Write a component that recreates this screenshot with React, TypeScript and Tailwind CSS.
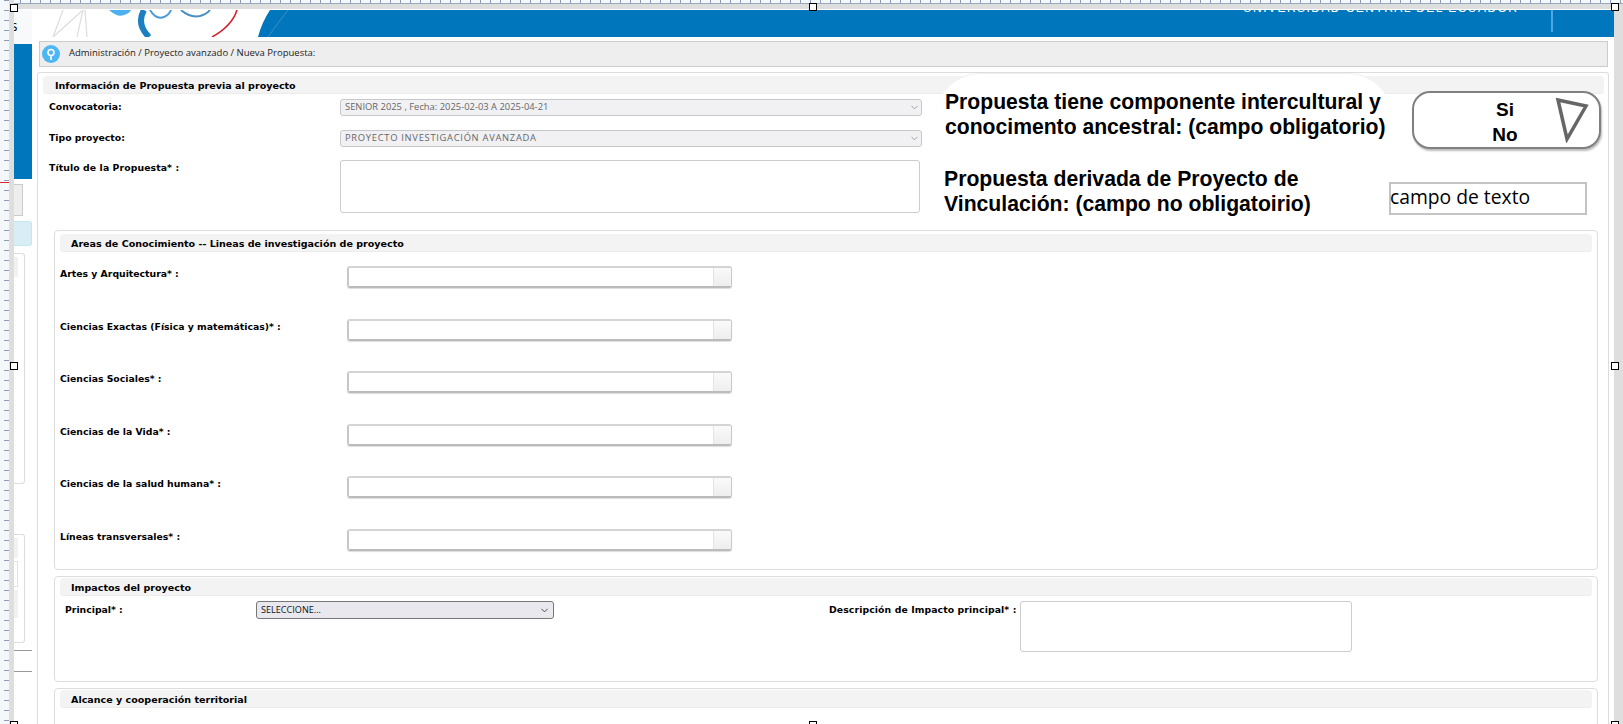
import React from "react";
import { ChevronDown } from "lucide-react";

const areas = [
  "Artes y Arquitectura* :",
  "Ciencias Exactas (Física y matemáticas)* :",
  "Ciencias Sociales* :",
  "Ciencias de la Vida* :",
  "Ciencias de la salud humana* :",
  "Líneas transversales* :",
];

function SectionTitle({ children, className }: { children: React.ReactNode; className: string }) {
  return (
    <div className={`h-[18px] rounded-[4px] bg-[#f3f3f3] border-b border-[#ececec] text-[9.55px] font-bold text-black leading-[20px] ${className}`}>
      {children}
    </div>
  );
}

function Label({ children, className }: { children: React.ReactNode; className: string }) {
  return <div className={`text-[9.3px] font-bold text-black ${className}`}>{children}</div>;
}

// select deshabilitado de la primera seccion
function GreySelect({ text, className }: { text: string; className?: string }) {
  return (
    <div className="w-[582px] h-[17px] rounded-[3px] border border-[#c8c8cc] bg-[#f1f1f4] flex items-center justify-between pl-[4px] pr-[1px] font-['Open_Sans',sans-serif] text-[9.4px] text-[#666]">
      <span className={className}>{text}</span>
      <ChevronDown size={11} className="text-[#999]" />
    </div>
  );
}

function ComboInput() {
  return (
    <div className="w-[385px] h-[22px] flex rounded-[3px] border border-l-2 border-[#c8c8c8] border-b-2 border-b-[#bbb] border-t-2 border-t-[#d4d4d4] shadow-[0_1px_1px_#ddd]">
      <div className="flex-1 bg-white" />
      <div className="w-[18px] rounded-r-[2px] bg-gradient-to-b from-[#fafafa] to-[#eeeeee] border-l border-[#e4e4e4]" />
    </div>
  );
}

function Handle({ className }: { className: string }) {
  return <div className={`absolute w-[8px] h-[8px] bg-white border border-black ${className}`} />;
}

function Logo() {
  return (
    <svg width="270" height="27" viewBox="0 0 270 27" className="shrink-0">
      <path d="M0 0H238Q230 12 226 27H0Z" fill="#fff" />
      <g stroke="#dcdcdc" strokeWidth="1.2" fill="none">
        <path d="M31 0L21 27" />
        <path d="M51 0L21 27" />
        <path d="M51 0L45 27" />
        <path d="M53 0L55 27" />
      </g>
      <path d="M77 0Q86 8 92 5Q98 3 99 0Z" fill="#4db0ef" />
      <path d="M112 0Q104 14 117 27" stroke="#1b7fc0" strokeWidth="6" fill="none" />
      <path d="M118 0Q124 10 132 7Q137 5 139 0" stroke="#4a9bd6" strokeWidth="2" fill="none" />
      <path d="M149 0Q158 8 168 6Q175 4 178 0" stroke="#4a8fc4" strokeWidth="2" fill="none" />
      <path d="M205 0Q200 16 180 27" stroke="#d4222e" strokeWidth="1.6" fill="none" />
      <path d="M256 0Q245 14 236 27" stroke="#3d8fc4" strokeWidth="1" fill="none" />
    </svg>
  );
}

export default function App() {
  return (
    <div className="relative h-[724px] w-full overflow-hidden bg-white font-['DejaVu_Sans',sans-serif] flex flex-col">
      {/* reglas de arriba */}
      <div className="h-[3px] shrink-0 bg-[repeating-linear-gradient(90deg,#8b9bb8_0,#8b9bb8_1px,#f5f8fb_1px,#f5f8fb_10px)]" />
      <div className="h-[6px] shrink-0 bg-[#dedede] border-t border-[#9aa8c0]" />
      <div className="h-[1px] shrink-0 bg-white" />

      <div className="flex flex-1 min-h-0">
        {/* regla izquierda */}
        <div className="w-[9px] -mt-[10px] shrink-0 bg-[#f5f8fb] bg-[repeating-linear-gradient(180deg,#8b9bb8_0,#8b9bb8_1px,transparent_1px,transparent_10px)] bg-[length:5px_100%] bg-right bg-no-repeat" />
        <div className="w-[5px] -mt-[10px] shrink-0 bg-[#dedede]" />

        {/* barra lateral cortada */}
        <div className="w-[18px] shrink-0 flex flex-col bg-white text-black">
          <div className="h-[34px] bg-[#f8f9fb] overflow-hidden text-[10px] leading-[10px] pt-[13px] -indent-[3px]">S</div>
          <div className="h-[135px] bg-[#0077bd]" />
          <div className="w-[9px] h-[32px] mt-[5px] bg-[#eee] border border-l-0 border-[#ccc]" />
          <div className="h-[25px] mt-[5px] bg-[#d9edf7] border border-l-0 border-[#c5e8f0] rounded-r-[3px]" />
          <div className="w-[11px] h-[231px] mt-[7px] border border-l-0 border-[#ddd] rounded-r-[3px] pt-[3px]">
            <div className="w-[4px] h-[20px] bg-[#f1f1f1]" />
          </div>
          <div className="w-[11px] h-[109px] mt-[50px] border border-l-0 border-[#ddd] rounded-r-[3px] pt-[3px] flex flex-col gap-[3px]">
            <div className="w-[4px] h-[20px] bg-[#f1f1f1]" />
            <div className="w-[4px] h-[26px] border border-l-0 border-[#e2e2e2]" />
            <div className="w-[4px] h-[28px] bg-[#f1f1f1]" />
          </div>
          <div className="h-[1px] mt-[7px] bg-[#999]" />
          <div className="h-[1px] mt-[20px] bg-[#999]" />
        </div>

        {/* contenido */}
        <div className="relative flex-1 min-w-0 flex flex-col">
          <div className="relative h-[27px] shrink-0 bg-[#0077bd] flex overflow-hidden">
            <Logo />
            <div className="absolute left-[1211px] -top-[8px] text-[12px] leading-[12px] tracking-[1.45px] text-white font-['Liberation_Sans',sans-serif] whitespace-nowrap">
              UNIVERSIDAD CENTRAL DEL ECUADOR
            </div>
            <div className="absolute left-[1519px] top-0 w-[2px] h-[22px] bg-[#4da6e8]" />
          </div>

          <div className="h-[26px] shrink-0 mt-[4px] ml-[7px] mr-[6px] bg-[#eee] border border-[#ccc] flex items-center pl-[2px] gap-[9px]">
            <div className="w-[18px] h-[18px] rounded-full bg-[#4db6f5] flex items-center justify-center">
              <svg width="10" height="13" viewBox="0 0 10 13">
                <circle cx="5" cy="4.5" r="3" fill="none" stroke="#fff" strokeWidth="1.6" />
                <path d="M5 7.5V12" stroke="#fff" strokeWidth="1.6" />
              </svg>
            </div>
            <span className="font-['Open_Sans',sans-serif] text-[9.5px] text-[#222] -mt-[2px]">
              Administración / Proyecto avanzado / Nueva Propuesta:
            </span>
          </div>

          {/* panel del formulario */}
          <div className="mt-[5px] ml-[5px] mr-[5px] flex-1 border border-b-0 border-[#ddd] rounded-t-[3px] pt-[3px]">
            <SectionTitle className="ml-[5px] mr-[4px] pl-[12px]">Información de Propuesta previa al proyecto</SectionTitle>

            <div className="mt-[5px] pl-[11px] flex">
              <Label className="w-[291px] leading-[16px]">Convocatoria:</Label>
              <GreySelect text="SENIOR 2025 , Fecha: 2025-02-03 A 2025-04-21" />
            </div>
            <div className="mt-[14px] pl-[11px] flex">
              <Label className="w-[291px] leading-[16px]">Tipo proyecto:</Label>
              <GreySelect text="PROYECTO INVESTIGACIÓN AVANZADA" className="tracking-[0.7px]" />
            </div>
            <div className="mt-[13px] pl-[11px] flex">
              <Label className="w-[291px] leading-[16px] tracking-[0.1px]">Título de la Propuesta* :</Label>
              <div className="w-[580px] h-[53px] bg-white border border-[#ccc] rounded-[3px]" />
            </div>

            {/* areas de conocimiento */}
            <div className="mt-[17px] ml-[16px] mr-[10px] h-[340px] border border-[#ddd] rounded-[4px] pt-[3px]">
              <SectionTitle className="ml-[5px] mr-[5px] pl-[11px]">Areas de Conocimiento -- Lineas de investigación de proyecto</SectionTitle>
              <div className="mt-[14px] pl-[5px] grid auto-rows-[52.6px]">
                {areas.map((a) => (
                  <div key={a} className="flex">
                    <Label className="w-[287px] leading-[15px]">{a}</Label>
                    <ComboInput />
                  </div>
                ))}
              </div>
            </div>

            {/* impactos */}
            <div className="mt-[6px] ml-[16px] mr-[10px] h-[106px] border border-[#ddd] rounded-[4px] pt-[1px]">
              <SectionTitle className="ml-[5px] mr-[5px] pl-[11px]">Impactos del proyecto</SectionTitle>
              <div className="mt-[5px] pl-[10px] flex">
                <Label className="w-[191px] leading-[17px]">Principal* :</Label>
                <div className="w-[298px] h-[18px] rounded-[3px] border border-[#777] bg-[#e8e8ee] flex items-center justify-between pl-[4px] pr-[3px] font-['Open_Sans',sans-serif] text-[9.1px] text-[#111]">
                  <span>SELECCIONE...</span>
                  <ChevronDown size={11} className="text-[#444]" />
                </div>
                <Label className="ml-[275px] w-[191px] leading-[17px] tracking-[0.1px] whitespace-nowrap">Descripción de Impacto principal* :</Label>
                <div className="w-[332px] h-[51px] bg-white border border-[#ccc] rounded-[3px]" />
              </div>
            </div>

            {/* alcance */}
            <div className="mt-[6px] ml-[16px] mr-[10px] h-[60px] border border-[#ddd] rounded-[4px] pt-[1px]">
              <SectionTitle className="ml-[5px] mr-[5px] pl-[11px]">Alcance y cooperación territorial</SectionTitle>
            </div>
          </div>
        </div>

        <div className="w-[9px] -mt-[6px] shrink-0 bg-[#dedede]" />
      </div>

      {/* notas pegadas sobre el panel */}
      <div className="absolute left-[936px] top-[73px] w-[456px] h-[60px] rounded-t-[44px] bg-white border-t border-[#f0f0f0]" />
      <div className="absolute left-[945px] top-[90px] font-['Liberation_Sans',sans-serif] text-[21.15px] font-bold leading-[24.5px] text-black whitespace-nowrap">
        Propuesta tiene componente intercultural y
        <br />
        conocimento ancestral: (campo obligatorio)
      </div>
      <div className="absolute left-[944px] top-[167px] font-['Liberation_Sans',sans-serif] text-[21.2px] font-bold leading-[24.5px] text-black whitespace-nowrap">
        Propuesta derivada de Proyecto de
        <br />
        Vinculación: (campo no obligatoirio)
      </div>
      <div className="absolute left-[1412px] top-[91px] w-[189px] h-[58px] rounded-[18px] bg-white border-2 border-[#808080] shadow-[1px_2px_2px_#bbb]">
        <div className="absolute left-[76px] w-[30px] top-[4px] font-['Liberation_Sans',sans-serif] text-[19px] font-bold leading-[25px] text-black text-center">
          Si
          <br />
          No
        </div>
        <svg width="36" height="46" viewBox="0 0 36 46" className="absolute left-[140px] top-[4px]">
          <path d="M4 3L32 9L13 42Z" fill="none" stroke="#666" strokeWidth="3.5" />
        </svg>
      </div>
      <div className="absolute left-[1389px] top-[182px] w-[198px] h-[33px] bg-white border-2 border-[#c4c4c4] font-['Open_Sans',sans-serif] text-[19.3px] leading-[26px] -indent-[1px] text-black">
        campo de texto
      </div>

      {/* tiradores de seleccion */}
      <Handle className="left-[10px] top-[4px]" />
      <Handle className="left-[809px] top-[3px]" />
      <Handle className="left-[1611px] top-[3px]" />
      <Handle className="left-[10px] top-[362px]" />
      <Handle className="left-[1611px] top-[362px]" />
      <Handle className="left-[10px] top-[721px]" />
      <Handle className="left-[809px] top-[721px]" />
      <Handle className="left-[1611px] top-[721px]" />
      <div className="absolute left-0 top-[182px] w-[9px] h-[1px] bg-[#e0232e]" />
    </div>
  );
}
